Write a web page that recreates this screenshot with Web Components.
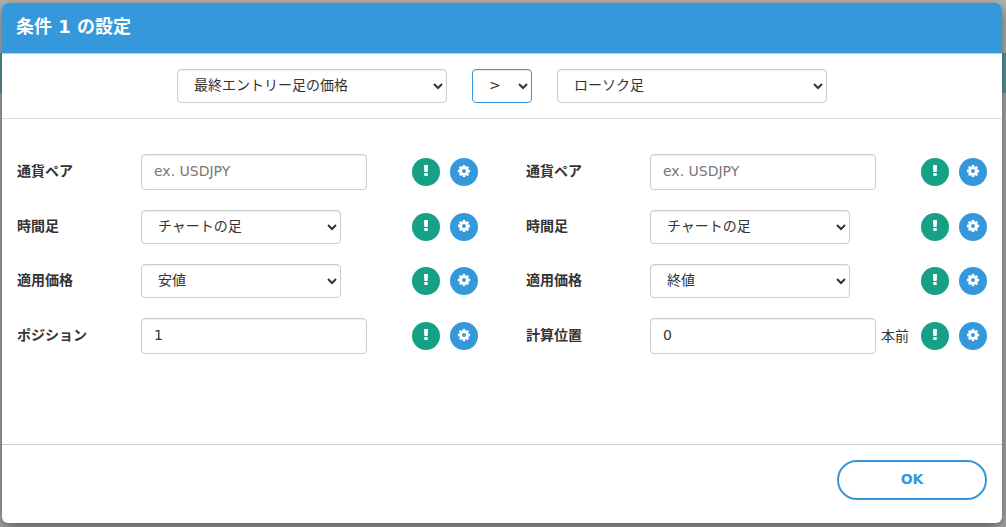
<!DOCTYPE html>
<html lang="ja">
<head>
<meta charset="utf-8">
<meta name="viewport" content="width=device-width, initial-scale=1">
<title>条件 1 の設定</title>
<style>
  body {
    margin: 0;
    color: #333;
    font: 14px/20px "DejaVu Sans", "Noto Sans CJK JP", sans-serif;
  }
</style>
</head>
<body>
<modal-backdrop>
  <modal-dialog>
    <span slot="title">条件 1 の設定</span>
    <compare-bar slot="toolbar"></compare-bar>
    <condition-fields>
      <field-row type="text" placeholder="ex. USDJPY">通貨ペア</field-row>
      <field-row type="select" value="チャートの足">時間足</field-row>
      <field-row type="select" value="安値">適用価格</field-row>
      <field-row type="text" value="1">ポジション</field-row>
    </condition-fields>
    <condition-fields>
      <field-row type="text" placeholder="ex. USDJPY">通貨ペア</field-row>
      <field-row type="select" value="チャートの足">時間足</field-row>
      <field-row type="select" value="終値">適用価格</field-row>
      <field-row type="text" value="0">計算位置<span slot="suffix">本前</span></field-row>
    </condition-fields>
    <pill-button slot="footer">OK</pill-button>
  </modal-dialog>
</modal-backdrop>

<script>
const controlStyles = `
  * { box-sizing: border-box; }
  input, select {
    display: block;
    width: 100%;
    margin: 0;
    color: #333;
    background: #fff;
    border: 1px solid #ccc;
    border-radius: 4px;
    box-shadow: inset 0 1px 1px rgba(0, 0, 0, .075);
    font: inherit;
  }
  input { height: 36px; padding: 6px 12px 8px; }
  input::placeholder { color: #777; opacity: 1; }
  select { height: 34px; padding: 5px 0 7px 12px; }
`;

function define(name, html, setup) {
  const template = document.createElement('template');
  template.innerHTML = html;
  customElements.define(name, class extends HTMLElement {
    constructor() {
      super();
      this.attachShadow({ mode: 'open' }).append(template.content.cloneNode(true));
    }
    connectedCallback() {
      if (setup) setup(this, this.shadowRoot);
    }
  });
}

// Dimmed page behind the dialog: a page header, a teal navigation strip, then content.
define('modal-backdrop', `
  <style>
    :host {
      display: block;
      box-sizing: border-box;
      min-height: 100vh;
      padding: 3px 4px 4px 2px;
      background: linear-gradient(#b4b4aa 0 53px, #5a9a9e 53px 93px, #acacac 93px);
    }
  </style>
  <slot></slot>
`);

define('modal-dialog', `
  <style>
    * { box-sizing: border-box; }
    :host {
      display: flex;
      flex-direction: column;
      min-height: calc(100vh - 7px);
      background: #fff;
      border-radius: 6px;
      box-shadow: 0 5px 15px rgba(0, 0, 0, .5);
    }
    header {
      height: 51px;
      padding: 12px 14px;
      color: #fff;
      background: #3498db;
      border-bottom: 1px solid #ccc;
      border-radius: 6px 6px 0 0;
    }
    h1 { margin: 0; font-size: 18px; line-height: 24px; }
    .toolbar { padding: 15px; border-bottom: 1px solid #ddd; }
    main {
      flex: 1;
      display: grid;
      grid-template-columns: 1fr 1fr;
      align-items: start;
      gap: 48px;
      padding: 35px 15px;
    }
    footer {
      display: flex;
      justify-content: flex-end;
      padding: 15px 15px 23px;
      border-top: 1px solid #ccc;
    }
  </style>
  <header><h1><slot name="title"></slot></h1></header>
  <div class="toolbar"><slot name="toolbar"></slot></div>
  <main><slot></slot></main>
  <footer><slot name="footer"></slot></footer>
`);

define('compare-bar', `
  <style>
    ${controlStyles}
    :host { display: flex; justify-content: center; gap: 25px; }
    .side { flex: 0 1 270px; }
    .operator { flex: 0 0 60px; border-color: #3498db; }
  </style>
  <select class="side" aria-label="左辺"><option>最終エントリー足の価格</option></select>
  <select class="operator" aria-label="比較"><option>&gt;</option></select>
  <select class="side" aria-label="右辺"><option>ローソク足</option></select>
`);

define('condition-fields', `
  <style>:host { display: grid; gap: 20px; min-width: 0; }</style>
  <slot></slot>
`);

define('field-row', `
  <style>
    ${controlStyles}
    :host { display: flex; align-items: center; }
    label { flex: 0 0 124px; padding-bottom: 2px; font-weight: bold; }
    .control { flex: 0 1 226px; min-width: 0; }
    .control.narrow { flex-basis: 200px; }
    .suffix { flex: 1; padding-left: 5px; white-space: nowrap; }
    .actions { display: flex; gap: 10px; }
  </style>
  <label for="control"><slot></slot></label>
  <div class="control"></div>
  <div class="suffix"><slot name="suffix"></slot></div>
  <div class="actions">
    <icon-button icon="info" label="説明"></icon-button>
    <icon-button icon="cog" label="設定"></icon-button>
  </div>
`, (host, root) => {
  const isSelect = host.getAttribute('type') === 'select';
  const control = document.createElement(isSelect ? 'select' : 'input');
  control.id = 'control';
  if (isSelect) {
    control.add(new Option(host.getAttribute('value')));
  } else {
    control.type = 'text';
    control.placeholder = host.getAttribute('placeholder') || '';
    control.value = host.getAttribute('value') || '';
  }
  const box = root.querySelector('.control');
  box.classList.toggle('narrow', isSelect);
  box.replaceChildren(control);
});

const icons = {
  info: '<path d="M1118 1216v256q0 26-19 45t-45 19h-316q-26 0-45-19t-19-45v-256q0-26 19-45t45-19h316q26 0 45 19t19 45zm30-1024l-28 768q-1 26-20.500 45t-45.500 19h-316q-26 0-45.500-19t-20.500-45l-28-768q-1-26 17.500-45t44.500-19h380q26 0 44.500 19t17.500 45z"/>',
  cog: '<path transform="translate(128 0)" d="M1024 896q0-106-75-181t-181-75-181 75-75 181 75 181 181 75 181-75 75-181zm512-109v222q0 12-8 23t-20 13l-185 28q-19 54-39 91 35 50 107 138 10 12 10 25t-9 23q-27 37-99 108t-94 71q-12 0-26-9l-138-108q-44 23-91 38-16 136-29 186-7 28-36 28h-222q-14 0-24.500-8.500t-11.500-21.500l-28-184q-49-16-90-37l-141 107q-10 9-25 9-14 0-25-11-126-114-165-168-7-10-7-23 0-12 8-23 15-21 51-66.500t54-70.500q-27-50-41-99l-183-27q-13-2-21-12.500t-8-23.500v-222q0-12 8-23t19-13l186-28q14-46 39-92-40-57-107-138-10-12-10-24 0-10 9-23 26-36 98.500-107.500t94.500-71.500q13 0 26 10l138 107q44-23 91-38 16-136 29-186 7-28 36-28h222q14 0 24.500 8.500t11.500 21.500l28 184q49 16 90 37l142-107q9-9 24-9 13 0 25 10 129 119 165 170 7 8 7 22 0 12-8 23-15 21-51 66.500t-54 70.500q26 50 41 98l183 28q13 2 21 12.500t8 23.500z"/>'
};

define('icon-button', `
  <style>
    :host { display: block; --fill: #16a085; }
    :host([icon="cog"]) { --fill: #3498db; }
    button {
      display: flex;
      justify-content: center;
      box-sizing: border-box;
      width: 28px;
      height: 28px;
      padding: 6px 0 0;
      color: #fff;
      background: var(--fill);
      border: 0;
      border-radius: 50%;
    }
    svg { width: 14px; height: 14px; fill: currentColor; }
    :host([icon="cog"]) svg { stroke: currentColor; stroke-width: 24; }
  </style>
  <button type="button"><svg viewBox="0 0 1792 1792" aria-hidden="true"></svg></button>
`, (host, root) => {
  root.querySelector('svg').innerHTML = icons[host.getAttribute('icon')];
  root.querySelector('button').setAttribute('aria-label', host.getAttribute('label'));
});

define('pill-button', `
  <style>
    :host { display: block; }
    button {
      box-sizing: border-box;
      width: 150px;
      height: 40px;
      padding: 0 0 2px;
      color: #3498db;
      background: #fff;
      border: 2px solid #3498db;
      border-radius: 20px;
      font: inherit;
      font-weight: bold;
    }
  </style>
  <button type="button"><slot></slot></button>
`);
</script>
</body>
</html>
